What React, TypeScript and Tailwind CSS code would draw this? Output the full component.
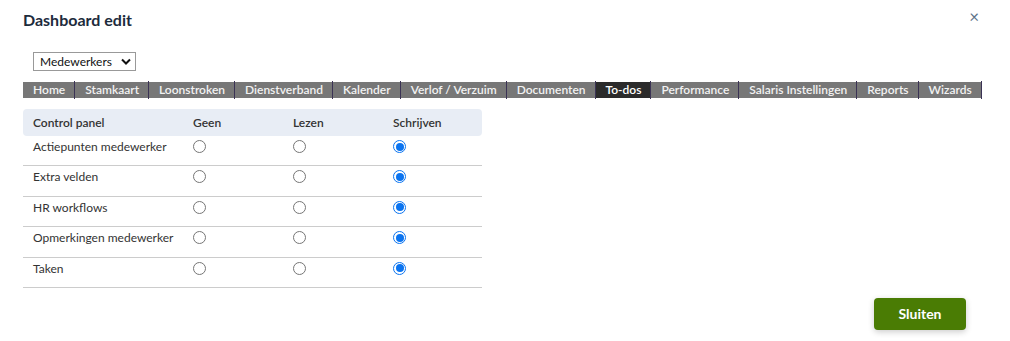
import React from "react";

const tabs = [
  "Home",
  "Stamkaart",
  "Loonstroken",
  "Dienstverband",
  "Kalender",
  "Verlof / Verzuim",
  "Documenten",
  "To-dos",
  "Performance",
  "Salaris Instellingen",
  "Reports",
  "Wizards",
];

const rows = [
  "Actiepunten medewerker",
  "Extra velden",
  "HR workflows",
  "Opmerkingen medewerker",
  "Taken",
];

function Radio({ checked }: { checked?: boolean }) {
  if (checked) {
    return (
      <span className="inline-flex h-[13px] w-[13px] items-center justify-center rounded-full border-[1.5px] border-[#0b74f0] bg-white">
        <span className="h-[8px] w-[8px] rounded-full bg-[#0b74f0]" />
      </span>
    );
  }
  return <span className="inline-block h-[13px] w-[13px] rounded-full border border-[#767676] bg-white" />;
}

export default function App() {
  return (
    <div
      className="relative h-[341px] w-[1010px] bg-white text-[#333]"
      style={{ fontFamily: "Lato, 'Noto Sans', sans-serif" }}
    >
      <div className="flex items-start justify-between pl-[23px] pr-[31px] pt-[10px]">
        <h1 className="text-[16px] font-bold leading-[20px] text-[#1d2b3c]">Dashboard edit</h1>
        <span className="mt-[-3px] text-[17px] leading-[20px] text-[#5f7388]">×</span>
      </div>

      <div className="pl-[33px] pt-[22px]">
        <div className="flex h-[19px] w-[103px] items-center justify-between border border-[#999] pl-[6px] pr-[4px] text-[12px] text-[#111]">
          <span>Medewerkers</span>
          <svg width="10" height="7" viewBox="0 0 10 7">
            <path d="M1 1.5 L5 5.5 L9 1.5" stroke="#111" strokeWidth="2" fill="none" />
          </svg>
        </div>
      </div>

      <div className="ml-[23px] mt-[10px] flex h-[18px]">
        {tabs.map((t) => {
          const active = t === "To-dos";
          return (
            <div key={t} className="flex items-center border-r border-[#3b3355]">
              <span
                className={`h-[16px] pl-[10px] pr-[9px] text-[12px] font-semibold leading-[16px] ${
                  active ? "bg-[#2b2b2b] text-white" : "bg-[#777] text-[#f2f2f2]"
                }`}
              >
                {t}
              </span>
            </div>
          );
        })}
      </div>

      <div className="ml-[23px] mt-[10px] w-[459px]">
        <div className="grid h-[27px] grid-cols-[160px_100px_100px_1fr] items-center rounded-[4px] bg-[#e8edf5] pl-[10px] text-[12px] font-semibold text-[#333]">
          <span>Control panel</span>
          <span>Geen</span>
          <span>Lezen</span>
          <span>Schrijven</span>
        </div>
        {rows.map((r) => (
          <div
            key={r}
            className="grid h-[30.4px] grid-cols-[160px_100px_100px_1fr] items-start border-b border-[#ccc] pl-[10px] pt-[3px] text-[12px] leading-[16px] text-[#333]"
          >
            <span>{r}</span>
            <span className="flex pt-[1px]">
              <Radio />
            </span>
            <span className="flex pt-[1px]">
              <Radio />
            </span>
            <span className="flex pt-[1px]">
              <Radio checked />
            </span>
          </div>
        ))}
      </div>

      <div className="flex justify-end pr-[44px] pt-[10px]">
        <button className="h-[32px] w-[92px] rounded-[4px] bg-[#4a7c04] text-[14px] font-bold text-white shadow-[0_2px_6px_rgba(0,0,0,0.2)]">
          Sluiten
        </button>
      </div>
    </div>
  );
}
